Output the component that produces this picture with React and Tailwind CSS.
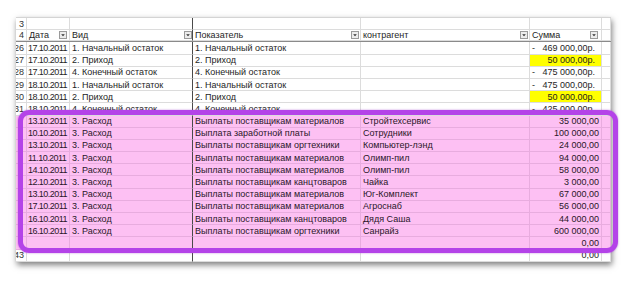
import React from 'react';

const cols = 'grid-cols-[11px_43px_123px_168px_169px_72px_9px]';

const FilterBtn = () => (
  <svg width="8" height="8" viewBox="0 0 8 8" className="shrink-0">
    <rect x="0.5" y="0.5" width="7" height="7" fill="#ececec" stroke="#9a9a9a" />
    <path d="M2.2 3.2 L5.8 3.2 L4 5.2 Z" fill="#333" />
  </svg>
);

const topRows = [
  ['26', '17.10.2011', '1. Начальный остаток', '1. Начальный остаток', '', '469 000,00р.', true, false],
  ['27', '17.10.2011', '2. Приход', '2. Приход', '', '50 000,00р.', false, true],
  ['28', '17.10.2011', '4. Конечный остаток', '4. Конечный остаток', '', '475 000,00р.', true, false],
  ['29', '18.10.2011', '1. Начальный остаток', '1. Начальный остаток', '', '475 000,00р.', true, false],
  ['30', '18.10.2011', '2. Приход', '2. Приход', '', '50 000,00р.', false, true],
  ['31', '18.10.2011', '4. Конечный остаток', '4. Конечный остаток', '', '425 000,00р.', true, false],
];

const expenses = [
  ['13.10.2011', 'Выплаты поставщикам материалов', 'Стройтехсервис', '35 000,00'],
  ['10.10.2011', 'Выплата заработной платы', 'Сотрудники', '100 000,00'],
  ['13.10.2011', 'Выплаты поставщикам оргтехники', 'Компьютер-лэнд', '24 000,00'],
  ['11.10.2011', 'Выплаты поставщикам материалов', 'Олимп-пил', '94 000,00'],
  ['14.10.2011', 'Выплаты поставщикам материалов', 'Олимп-пил', '58 000,00'],
  ['12.10.2011', 'Выплаты поставщикам канцтоваров', 'Чайка', '3 000,00'],
  ['13.10.2011', 'Выплаты поставщикам материалов', 'Юг-Комплект', '67 000,00'],
  ['17.10.2011', 'Выплаты поставщикам материалов', 'Агроснаб', '56 000,00'],
  ['16.10.2011', 'Выплаты поставщикам канцтоваров', 'Дядя Саша', '44 000,00'],
  ['16.10.2011', 'Выплаты поставщикам оргтехники', 'Санрайз', '600 000,00'],
];

const cell = 'border-r border-b border-[#dcdcdc] whitespace-nowrap overflow-hidden pl-[2px] flex items-center';
const dateCell = 'border-r border-b border-[#dcdcdc] whitespace-nowrap overflow-hidden pl-[1px] flex items-center tracking-[-0.55px]';
const rowCls = `grid ${cols} h-[12.2px] leading-[12px]`;

const RowNum = ({ n }) => (
  <div className="border-r border-b border-[#dcdcdc] overflow-hidden flex items-center justify-end pr-[2px] text-[#333]">
    {n}
  </div>
);

const App = () => {
  return (
    <div className="w-[628px] h-[282px] bg-white relative overflow-hidden font-['Liberation_Sans',sans-serif] text-[9px] text-[#1e1e1e]">
      <div className="pt-[17px] pl-[16px]">
        <div className="w-[595px] bg-white border-t border-[#d4d4d4] shadow-[1px_3px_6px_rgba(0,0,0,0.5)]">
          {/* row 3 */}
          <div className={rowCls}>
            <RowNum n="3" />
            <div className={cell} />
            <div className={`${cell} border-r-[#4a4a4a]`} />
            <div className={cell} />
            <div className={cell} />
            <div className={cell} />
            <div className={cell} />
          </div>

          {/* header */}
          <div className={`${rowCls} border-b border-[#8a8a8a]`}>
            <RowNum n="4" />
            <div className={`${cell} justify-between pr-[2px]`}>Дата <FilterBtn /></div>
            <div className={`${cell} justify-between border-r-[#4a4a4a]`}>Вид <FilterBtn /></div>
            <div className={`${cell} justify-between pr-[1px]`}>Показатель <FilterBtn /></div>
            <div className={`${cell} justify-between pr-[1px]`}>контрагент <FilterBtn /></div>
            <div className={`${cell} justify-between pr-[3px]`}>Сумма <FilterBtn /></div>
            <div className={cell} />
          </div>

          {topRows.map((r) => (
            <div key={r[0]} className={rowCls}>
              <RowNum n={r[0]} />
              <div className={dateCell}>{r[1]}</div>
              <div className={`${cell} border-r-[#4a4a4a]`}>{r[2]}</div>
              <div className={cell}>{r[3]}</div>
              <div className={cell}>{r[4]}</div>
              <div className={`${cell} justify-between pr-[6px] ${r[7] ? 'bg-[#ffff00]' : ''}`}>
                <span>{r[6] ? '-' : ''}</span>
                <span>{r[5]}</span>
              </div>
              <div className={cell} />
            </div>
          ))}

          {expenses.map((r, i) => (
            <div key={i} className={`${rowCls} bg-[#fdc0f3] text-[#2a1628]`}>
              <div className="border-r border-b border-[#e8acdf]" />
              <div className={`${dateCell} border-[#e8acdf]`}>{r[0]}</div>
              <div className={`${cell} border-b-[#e8acdf] border-r-[#4a4a4a]`}>3. Расход</div>
              <div className={`${cell} border-[#e8acdf]`}>{r[1]}</div>
              <div className={`${cell} border-[#e8acdf]`}>{r[2]}</div>
              <div className={`${cell} border-[#e8acdf] justify-end pr-[2px]`}>{r[3]}</div>
              <div className={`${cell} border-[#e8acdf]`} />
            </div>
          ))}

          {/* empty total row */}
          <div className={`${rowCls} bg-[#fdc0f3] text-[#2a1628]`}>
            <div className="border-r border-b border-[#e8acdf]" />
            <div className={`${cell} border-[#e8acdf]`} />
            <div className={`${cell} border-b-[#e8acdf] border-r-[#4a4a4a]`} />
            <div className={`${cell} border-[#e8acdf]`} />
            <div className={`${cell} border-[#e8acdf]`} />
            <div className={`${cell} border-[#e8acdf] justify-end pr-[2px]`}>0,00</div>
            <div className={`${cell} border-[#e8acdf]`} />
          </div>

          {/* row 43 */}
          <div className={rowCls}>
            <RowNum n="43" />
            <div className={cell} />
            <div className={`${cell} border-r-[#4a4a4a]`} />
            <div className={cell} />
            <div className={cell} />
            <div className={`${cell} justify-end pr-[2px]`}>0,00</div>
            <div className={cell} />
          </div>
        </div>
      </div>

      {/* purple highlight frame */}
      <div className="absolute left-[18px] top-[110px] w-[600px] h-[143px] rounded-[11px] border-[5px] border-[#b443e8] shadow-[0_0_2px_rgba(150,40,200,0.6)]" />
    </div>
  );
};

export default App;
